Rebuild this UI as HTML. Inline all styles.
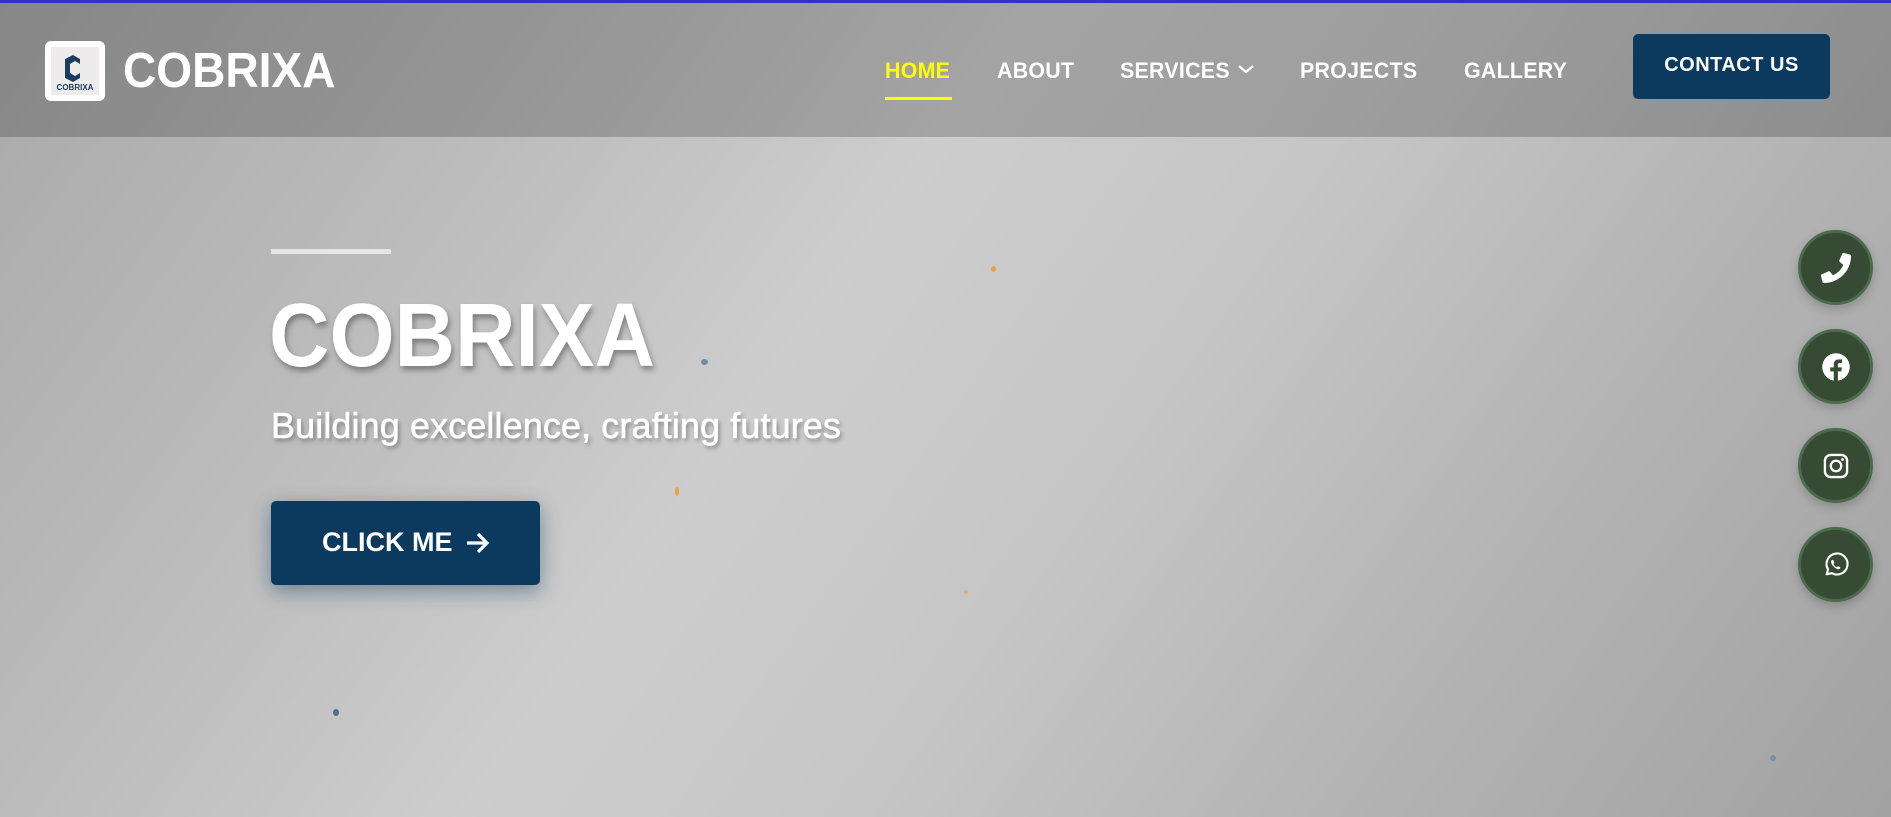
<!DOCTYPE html>
<html><head><meta charset="utf-8"><style>
*{margin:0;padding:0;box-sizing:border-box}
body{width:1891px;height:817px;overflow:hidden;font-family:"Liberation Sans",Arial,sans-serif;position:relative;
background:linear-gradient(125deg,#a9a9a9 0%,#bdbdbd 25%,#cdcdcd 42%,#c6c6c6 58%,#b3b3b3 78%,#a2a2a2 100%)}
.top{position:absolute;left:0;top:0;width:1891px;height:3px;background:#2a34c8}
.hdr{position:absolute;left:0;top:3px;width:1891px;height:134px;background:rgba(0,0,0,0.2)}
.logo{position:absolute;left:45px;top:41px;width:60px;height:60px;background:#fff;border-radius:6px;padding:6px}
.logo div{width:100%;height:100%;background:#eeeceb;position:relative}
.brand{position:absolute;left:123px;top:43px;font-size:49px;font-weight:bold;color:#fff;transform:scaleX(.94);transform-origin:left}
.nav{position:absolute;top:58px;font-size:22px;font-weight:bold;color:#fff;letter-spacing:.3px;transform:scaleX(.97);transform-origin:left}
.cta{position:absolute;left:1633px;top:34px;width:197px;height:65px;background:#0b3a5e;border-radius:5px;color:#fff;font-weight:bold;font-size:20px;text-align:center;line-height:62px;letter-spacing:.5px}
.bar{position:absolute;left:271px;top:249px;width:120px;height:5px;background:#e6e6e6}
h1{position:absolute;left:269px;top:291px;font-size:90px;line-height:1;font-weight:bold;color:#fff;text-shadow:2px 4px 6px rgba(0,0,0,.35);transform:scaleX(.93);transform-origin:left}
.sub{position:absolute;left:271px;top:408px;font-size:36px;line-height:1;color:#fff;text-shadow:2px 3px 4px rgba(0,0,0,.35);letter-spacing:.1px;-webkit-text-stroke:.6px #fff}
.btn{position:absolute;left:271px;top:501px;width:269px;height:84px;background:#0b3a5e;border-radius:5px;box-shadow:0 6px 20px rgba(11,58,94,.45)}
.btn span{position:absolute;left:51px;top:28px;font-weight:bold;font-size:27px;line-height:1;color:#fff}
.ic{position:absolute;left:1798px;width:75px;height:75px;border-radius:50%;background:#374a33;border:3px solid #4b6b4d;box-shadow:0 4px 10px rgba(0,0,0,.2);display:flex;align-items:center;justify-content:center}
.dot{position:absolute;border-radius:50%}
</style></head><body>
<div class="top"></div>
<div class="hdr"></div>
<div class="logo"><div>
<svg width="48" height="48" viewBox="0 0 48 48" style="position:absolute;left:0;top:0">
<path d="M22 8l7 4v5l-5-3-5 3v9l5 3 5-3v5l-7 4-8-4V12z" fill="#1b3e60"/>
<text x="24" y="43" font-size="8" font-weight="bold" fill="#1b3e60" text-anchor="middle" font-family="Liberation Sans">COBRIXA</text></svg>
</div></div>
<div class="brand">COBRIXA</div>
<div class="nav" style="left:885px;color:#ffff00">HOME</div>
<div style="position:absolute;left:885px;top:97px;width:67px;height:3px;background:#ffff00"></div>
<div class="nav" style="left:997px">ABOUT</div>
<div class="nav" style="left:1120px">SERVICES</div>
<svg style="position:absolute;left:1237px;top:63px" width="18" height="12" viewBox="0 0 18 12"><path d="M2 3l7 6 7-6" stroke="#fff" stroke-width="2.2" fill="none"/></svg>
<div class="nav" style="left:1300px">PROJECTS</div>
<div class="nav" style="left:1464px">GALLERY</div>
<div class="cta">CONTACT US</div>

<div class="bar"></div>
<h1>COBRIXA</h1>
<div class="sub">Building excellence, crafting futures</div>
<div class="btn"><span>CLICK ME</span><svg width="26" height="24" viewBox="0 0 26 24" style="position:absolute;left:194px;top:30px"><path d="M2 12h20M13 3l9 9-9 9" stroke="#fff" stroke-width="3.2" fill="none"/></svg></div>

<div class="dot" style="left:701px;top:359px;width:7px;height:6px;background:#6f8ba3"></div>
<div class="dot" style="left:991px;top:266px;width:5px;height:6px;background:#e6a540"></div>
<div class="dot" style="left:675px;top:487px;width:4px;height:9px;background:#e6a540"></div>
<div class="dot" style="left:964px;top:590px;width:4px;height:4px;background:#e6b060"></div>
<div class="dot" style="left:333px;top:709px;width:6px;height:7px;background:#4e6f93"></div>
<div class="dot" style="left:1770px;top:755px;width:6px;height:6px;background:#7890a8"></div>

<div class="ic" style="top:230px"><svg width="30" height="30" viewBox="0 0 512 512"><path transform="translate(512,0) scale(-1,1)" d="M497.39 361.8l-112-48a24 24 0 0 0-28 6.9l-49.6 60.6A370.66 370.66 0 0 1 130.6 204.11l60.6-49.6a23.94 23.94 0 0 0 6.9-28l-48-112A24.16 24.16 0 0 0 122.6.61l-104 24A24 24 0 0 0 0 48c0 256.5 207.9 464 464 464a24 24 0 0 0 23.4-18.6l24-104a24.29 24.29 0 0 0-14.01-27.6z" fill="#fff"/></svg></div>
<div class="ic" style="top:329px"><svg width="30" height="30" viewBox="0 0 24 24"><circle cx="12" cy="12" r="11" fill="#fff"/><path d="M13.5 24v-8.5h2.8l.4-3.2h-3.2v-2c0-.9.3-1.5 1.6-1.5h1.7V6a22 22 0 0 0-2.5-.1c-2.5 0-4.1 1.5-4.1 4.2v2.2H7.4v3.2h2.8V24z" fill="#374a33"/></svg></div>
<div class="ic" style="top:428px"><svg width="28" height="28" viewBox="0 0 24 24"><rect x="2.5" y="2.5" width="19" height="19" rx="5" stroke="#fff" stroke-width="2" fill="none"/><circle cx="12" cy="12" r="4.5" stroke="#fff" stroke-width="2" fill="none"/><circle cx="17.6" cy="6.4" r="1.2" fill="#fff"/></svg></div>
<div class="ic" style="top:527px"><svg width="28" height="28" viewBox="0 0 24 24"><path d="M4 20l1.2-4.2A9 9 0 1 1 8.5 19z" stroke="#fff" stroke-width="1.8" fill="none" stroke-linejoin="round"/><path d="M9 7.5c-.5 0-1.3.8-1.2 2 .2 2 2.8 5.2 5.5 6 1.3.4 2.2-.3 2.4-1l-.2-.7-1.8-.8-.9 1c-1.3-.5-2.6-1.8-3-3l.8-1-.7-1.9z" fill="#fff"/></svg></div>
</body></html>
